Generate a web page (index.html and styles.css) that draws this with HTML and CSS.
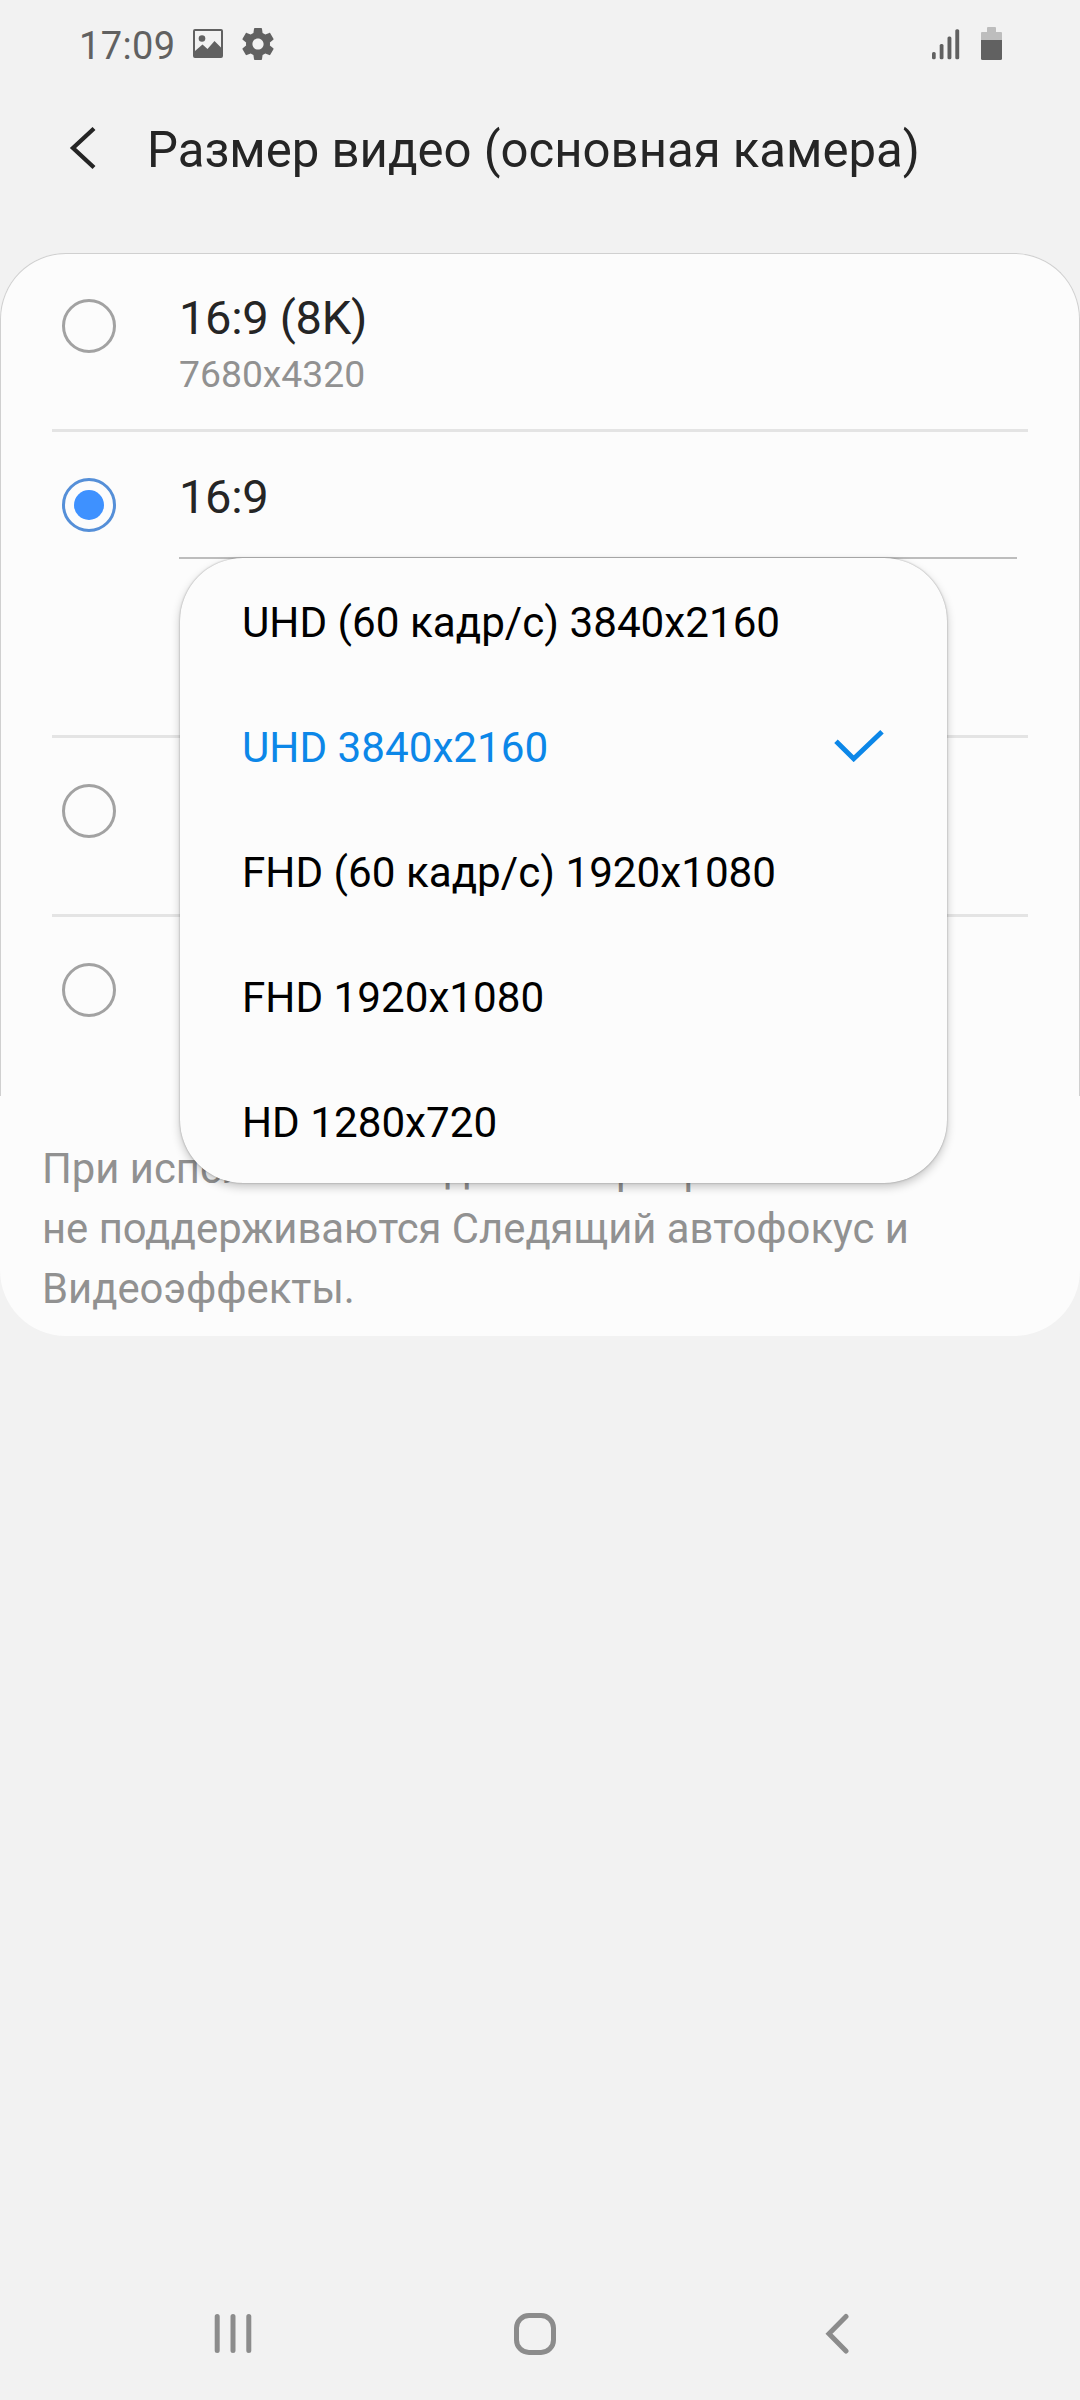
FILE: index.html
```html
<!DOCTYPE html>
<html lang="ru">
<head>
<meta charset="utf-8">
<title>Размер видео</title>
<link rel="stylesheet" href="styles.css">
</head>
<body>
<div class="screen">
  <header class="status-bar">
    <span class="clock">17:09</span>
    <svg class="icon-image" width="32" height="30" viewBox="0 0 32 30">
      <path fill="#616161" fill-rule="evenodd" d="M3 0h26q2 0 2 2v25q0 2-2 2H3q-2 0-2-2V2Q1 0 3 0zM3 2v20l7.500-6.500 5 4.500 7-8L29 18.500V2z"/>
      <circle cx="10" cy="9.500" r="3.300" fill="#616161"/>
    </svg>
    <svg class="icon-gear" width="32" height="32" viewBox="2 2 20 20">
      <path fill="#616161" d="M19.430 12.980c.040-.320.070-.640.070-.980s-.030-.660-.070-.980l2.110-1.650c.190-.150.240-.420.120-.640l-2-3.460c-.120-.220-.390-.300-.610-.220l-2.490 1c-.520-.400-1.080-.730-1.690-.980l-.380-2.650C14.460 2.180 14.250 2 14 2h-4c-.250 0-.460.180-.490.420l-.380 2.650c-.610.250-1.170.590-1.690.980l-2.490-1c-.230-.090-.490 0-.610.220l-2 3.460c-.130.220-.070.490.120.640l2.110 1.650c-.040.320-.070.650-.070.980s.030.660.070.980l-2.110 1.650c-.190.150-.240.420-.120.640l2 3.460c.120.220.390.300.610.220l2.490-1c.520.400 1.080.730 1.690.980l.380 2.650c.030.240.240.420.490.420h4c.250 0 .460-.180.490-.420l.380-2.650c.610-.250 1.170-.590 1.690-.980l2.490 1c.230.090.490 0 .610-.220l2-3.460c.120-.220.070-.490-.120-.640l-2.110-1.650zM12 15.500c-1.930 0-3.500-1.570-3.500-3.500s1.570-3.500 3.500-3.500 3.500 1.570 3.500 3.500-1.570 3.500-3.500 3.500z"/>
    </svg>
    <svg class="icon-signal" width="28" height="31" viewBox="0 0 28 31">
      <g fill="#616161">
        <rect x="0" y="23" width="3.700" height="7.300" rx="1.500"/>
        <rect x="7.700" y="15" width="3.800" height="15.300" rx="1.500"/>
        <rect x="15.500" y="7.500" width="3.900" height="22.800" rx="1.500"/>
        <rect x="23.300" y="0.300" width="3.900" height="30" rx="1.500"/>
      </g>
    </svg>
    <svg class="icon-battery" width="21" height="33" viewBox="0 0 21 33">
      <path fill="#bdbdbd" d="M6 5V1q0-1 1-1h7q1 0 1 1v4h5q1 0 1 1v8H0V6q0-1 1-1z"/>
      <path fill="#616161" d="M0 13h21v18.500q0 1.500-1.500 1.500h-18Q0 33 0 31.500z"/>
    </svg>
  </header>

  <div class="title-bar">
    <svg width="28" height="44" viewBox="0 0 28 44"><path d="M25 2.500 4 22 25 41.500" fill="none" stroke="#252525" stroke-width="4.300"/></svg>
    <h1 class="title">Размер видео (основная камера)</h1>
  </div>

  <main class="card">
    <div class="options">
      <div class="row">
        <span class="radio"></span>
        <div class="labels"><div class="label">16:9 (8K)</div><div class="sub">7680x4320</div></div>
      </div>
      <div class="row row-tall">
        <span class="radio radio-on"></span>
        <div class="labels">
          <div class="label">16:9</div>
          <div class="spinner">
            <ul class="menu">
              <li class="item">UHD (60 кадр/с) 3840x2160</li>
              <li class="item item-on">UHD 3840x2160
                <svg width="52" height="34" viewBox="0 0 52 34"><path d="M3 13.300 20.700 30.700 49 3.700" fill="none" stroke="#0c87e8" stroke-width="5"/></svg>
              </li>
              <li class="item">FHD (60 кадр/с) 1920x1080</li>
              <li class="item">FHD 1920x1080</li>
              <li class="item">HD 1280x720</li>
            </ul>
          </div>
        </div>
      </div>
      <div class="row"><span class="radio"></span></div>
      <div class="row"><span class="radio"></span></div>
    </div>
    <p class="note">При использовании данного разрешения<br>не поддерживаются Следящий автофокус и<br>Видеоэффекты.</p>
  </main>

  <nav class="nav">
    <svg width="38" height="42" viewBox="0 0 38 42"><path d="M3.200 3.500v34M19 3.500v34M34.800 3.500v34" stroke="#8c8c8c" stroke-width="5" stroke-linecap="round"/></svg>
    <svg width="42" height="42" viewBox="0 0 42 42"><rect x="2.500" y="2.500" width="37" height="37" rx="12.500" fill="none" stroke="#8c8c8c" stroke-width="5"/></svg>
    <svg class="nav-back" width="26" height="42" viewBox="0 0 26 42"><path d="M21 3.500 4 20.800 21 38" fill="none" stroke="#8c8c8c" stroke-width="5" stroke-linecap="round"/></svg>
  </nav>
</div>
</body>
</html>
```
FILE: styles.css
```css
* { box-sizing: border-box; }
body {
  margin: 0;
  background: #f2f2f2;
  font-family: Roboto, "Noto Sans", sans-serif;
}
svg { display: block; flex: none; }
.screen {
  width: 1080px;
  height: 2400px;
  display: flex;
  flex-direction: column;
  overflow: hidden;
}
.status-bar {
  height: 88px;
  padding: 0 78px 0 79px;
  display: flex;
  align-items: flex-start;
}
.clock {
  width: 113px;
  padding-top: 23px;
  font-size: 38px;
  line-height: 46px;
  letter-spacing: 0.4px;
  color: #616161;
}
.icon-image { margin-top: 29px; }
.icon-gear { margin: 28px 0 0 18px; }
.icon-signal { margin: 29px 0 0 auto; }
.icon-battery { margin: 27px 0 0 21px; }
.title-bar {
  height: 165px;
  padding: 30px 0 0 69px;
  display: flex;
  align-items: flex-start;
}
.title-bar svg { margin-top: 8px; }
.title {
  margin: 2px 0 0 50px;
  font-size: 49.100px;
  font-weight: 400;
  line-height: 60px;
  color: #252525;
  white-space: nowrap;
}
.card {
  height: 1083px;
  background: #fcfcfc;
  border-radius: 66px;
}
.options {
  height: 843px;
  border: 1px solid #d0d0d0;
  border-bottom: 0;
  border-radius: 66px 66px 0 0;
  padding: 0 51px;
  display: flex;
  flex-direction: column;
}
.row {
  height: 179px;
  border-bottom: 3px solid #e4e4e4;
  padding: 45px 11px 0 10px;
  display: flex;
  align-items: flex-start;
  gap: 63px;
}
.row:first-child { height: 178px; }
.row-tall { height: 306px; padding-top: 46px; }
.row:nth-child(n+3) { padding-top: 46px; }
.row:last-child { border-bottom: 0; }
.radio {
  flex: none;
  width: 54px;
  height: 54px;
  border: 3px solid #a2a2a2;
  border-radius: 50%;
  display: grid;
  place-items: center;
}
.radio-on { border-color: #558fd8; }
.radio-on::after {
  content: "";
  width: 30px;
  height: 30px;
  border-radius: 50%;
  background: #3e91ff;
}
.labels { flex: 1; }
.label {
  margin-top: -9px;
  font-size: 47px;
  line-height: 56px;
  letter-spacing: -0.300px;
  color: #252525;
}
.sub {
  margin-top: 5px;
  font-size: 37.300px;
  line-height: 46px;
  color: #919191;
}
.spinner {
  position: relative;
  height: 34px;
  border-bottom: 2px solid #bdbdbd;
}
.menu {
  position: absolute;
  z-index: 1;
  top: 33px;
  left: 1px;
  width: 767px;
  margin: 0;
  padding: 0;
  list-style: none;
  background: #fcfcfc;
  border-radius: 63px;
  box-shadow: 0 0 2px rgba(0,0,0,.35), 0 4px 10px rgba(0,0,0,.22);
}
.item {
  height: 125px;
  padding: 6px 62px 0;
  display: flex;
  align-items: center;
  justify-content: space-between;
  font-size: 42.200px;
  color: #000;
}
.item:first-child { height: 124px; padding-top: 5px; }
.item:last-child { height: 126px; padding-top: 5px; }
.item-on { color: #0c87e8; }
.item-on svg { margin: -6px 0 0 0; }
.note {
  margin: 0;
  padding: 43px 42px 0;
  font-size: 41.800px;
  line-height: 60px;
  color: #919191;
}
.nav {
  margin-top: auto;
  height: 87px;
  padding-left: 214px;
  display: flex;
  gap: 262px;
}
.nav-back { margin-left: 7px; }
```
